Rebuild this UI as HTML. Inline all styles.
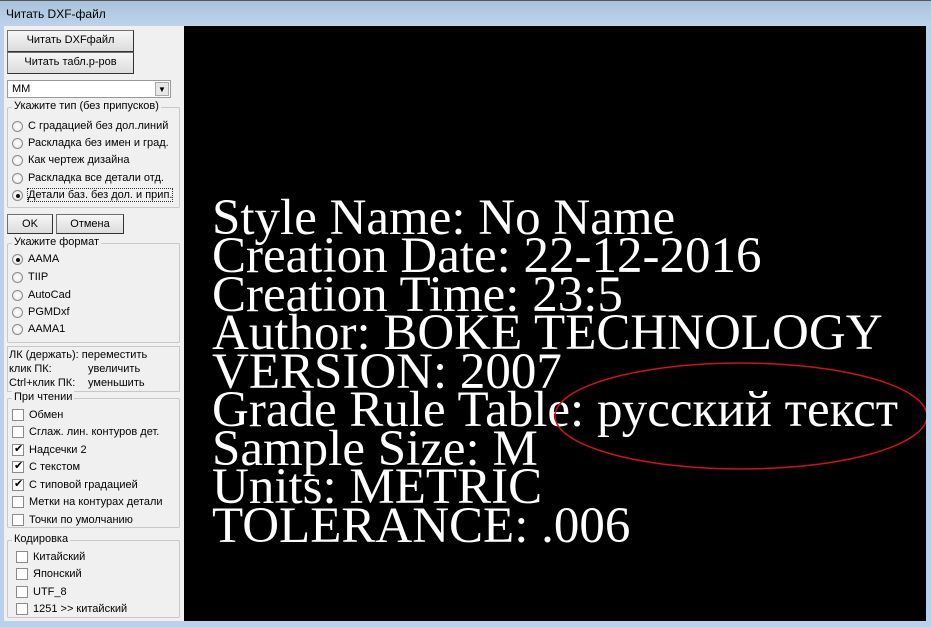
<!DOCTYPE html>
<html><head><meta charset="utf-8"><style>
*{margin:0;padding:0;box-sizing:border-box}
body{width:931px;height:627px;overflow:hidden;background:#b9d1ea;font-family:"Liberation Sans",sans-serif;font-size:11px;color:#000;position:relative}
.title{position:absolute;left:0;top:0;width:931px;height:26px;background:linear-gradient(#a9c3dc,#bcd3ea);border-top:1px solid #555;}
.title span{position:absolute;left:6px;top:6px;font-size:12px}
.panel{position:absolute;left:4px;top:26px;width:180px;height:595px;background:#f0f0f0}
.black{position:absolute;left:184px;top:26px;width:742px;height:595px;background:#000;overflow:hidden}
.a{position:absolute;white-space:nowrap}
.btn{position:absolute;background:linear-gradient(#f6f6f6,#dcdcdc);border:1px solid #707070;border-right-color:#333;border-bottom-color:#333;text-align:center;line-height:19px}
.grp{position:absolute;border:1px solid #c8c8c8;border-radius:2px}
.gl{position:absolute;background:#f0f0f0;padding:0 2px;top:-8px;left:4px}
.r{position:absolute;width:11px;height:11px;border-radius:50%;border:1px solid #8a8a8a;background:radial-gradient(#fff,#e4e4e4)}
.r.on::after{content:"";position:absolute;left:2.5px;top:2.5px;width:4px;height:4px;border-radius:50%;background:#111}
.c{position:absolute;width:12px;height:12px;border:1px solid #8a8a8a;background:#fff}
.c.on::after{content:"✔";position:absolute;left:1px;top:-3px;font-size:11px}
.txt{position:absolute;left:28px;top:172.6px;color:#fff;font-family:"Liberation Serif",serif;font-size:51px;line-height:38.5px;white-space:nowrap}
</style></head><body>
<div class="title"><span>Читать DXF-файл</span></div>
<div class="panel">
 <div class="btn" style="left:3px;top:4px;width:127px;height:22px">Читать DXFфайл</div>
 <div class="btn" style="left:3px;top:26px;width:127px;height:22px">Читать табл.р-ров</div>
 <div style="position:absolute;left:3px;top:54px;width:164px;height:18px;background:#fff;border:1px solid #999"><span class="a" style="left:4px;top:2px">MM</span><div style="position:absolute;right:1px;top:1px;width:14px;height:14px;background:#e8e8e8;border:1px solid #aaa;font-size:8px;text-align:center;line-height:14px">▼</div></div>
 <div class="grp" style="left:3px;top:81px;width:173px;height:101px"><span class="gl">Укажите тип (без припусков)</span></div>
 <div class="r" style="left:8px;top:95px"></div><span class="a" style="left:24px;top:94px">С градацией без дол.линий</span>
 <div class="r" style="left:8px;top:112px"></div><span class="a" style="left:24px;top:111px">Раскладка без имен и град.</span>
 <div class="r" style="left:8px;top:129px"></div><span class="a" style="left:24px;top:128px">Как чертеж дизайна</span>
 <div class="r" style="left:8px;top:147px"></div><span class="a" style="left:24px;top:146px">Раскладка все детали отд.</span>
 <div class="r on" style="left:8px;top:164px"></div><span class="a" style="left:24px;top:163px;outline:1px dotted #333">Детали баз. без дол. и прип.</span>
 <div class="btn" style="left:3px;top:188px;width:46px;height:20px">OK</div>
 <div class="btn" style="left:52px;top:188px;width:68px;height:20px">Отмена</div>
 <div class="grp" style="left:3px;top:217px;width:173px;height:100px"><span class="gl">Укажите формат</span></div>
 <div class="r on" style="left:8px;top:228px"></div><span class="a" style="left:24px;top:227px">AAMA</span>
 <div class="r" style="left:8px;top:246px"></div><span class="a" style="left:24px;top:245px">TIIP</span>
 <div class="r" style="left:8px;top:264px"></div><span class="a" style="left:24px;top:263px">AutoCad</span>
 <div class="r" style="left:8px;top:281px"></div><span class="a" style="left:24px;top:280px">PGMDxf</span>
 <div class="r" style="left:8px;top:298px"></div><span class="a" style="left:24px;top:297px">AAMA1</span>
 <div style="position:absolute;left:3px;top:320px;width:173px;height:46px;border:1px solid #c8c8c8"></div>
 <span class="a" style="left:5px;top:323px">ЛК (держать): переместить</span>
 <span class="a" style="left:5px;top:337px">клик ПК:</span><span class="a" style="left:84px;top:337px">увеличить</span>
 <span class="a" style="left:5px;top:351px">Ctrl+клик ПК:</span><span class="a" style="left:84px;top:351px">уменьшить</span>
 <div class="grp" style="left:3px;top:372px;width:173px;height:130px"><span class="gl">При чтении</span></div>
 <div class="c" style="left:8px;top:383px"></div><span class="a" style="left:25px;top:383px">Обмен</span>
 <div class="c" style="left:8px;top:400px"></div><span class="a" style="left:25px;top:400px">Сглаж. лин. контуров дет.</span>
 <div class="c on" style="left:8px;top:418px"></div><span class="a" style="left:25px;top:418px">Надсечки 2</span>
 <div class="c on" style="left:8px;top:435px"></div><span class="a" style="left:25px;top:435px">С текстом</span>
 <div class="c on" style="left:8px;top:453px"></div><span class="a" style="left:25px;top:453px">С типовой градацией</span>
 <div class="c" style="left:8px;top:470px"></div><span class="a" style="left:25px;top:470px">Метки на контурах детали</span>
 <div class="c" style="left:8px;top:488px"></div><span class="a" style="left:25px;top:488px">Точки по умолчанию</span>
 <div class="grp" style="left:3px;top:514px;width:173px;height:78px"><span class="gl">Кодировка</span></div>
 <div class="c" style="left:12px;top:525px"></div><span class="a" style="left:29px;top:525px">Китайский</span>
 <div class="c" style="left:12px;top:542px"></div><span class="a" style="left:29px;top:542px">Японский</span>
 <div class="c" style="left:12px;top:560px"></div><span class="a" style="left:29px;top:560px">UTF_8</span>
 <div class="c" style="left:12px;top:577px"></div><span class="a" style="left:29px;top:577px">1251 &gt;&gt; китайский</span>
</div>
<div class="black">
 <div class="txt">Style Name: No Name<br>Creation Date: 22-12-2016<br>Creation Time: 23:5<br>Author: BOKE TECHNOLOGY<br>VERSION: 2007<br>Grade Rule Table: русский текст<br>Sample Size: M<br>Units: METRIC<br>TOLERANCE: .006</div>
 <svg width="742" height="595" style="position:absolute;left:0;top:0"><ellipse cx="557" cy="390" rx="186" ry="53" fill="none" stroke="#d01020" stroke-width="1.5"/></svg>
</div>
</body></html>
